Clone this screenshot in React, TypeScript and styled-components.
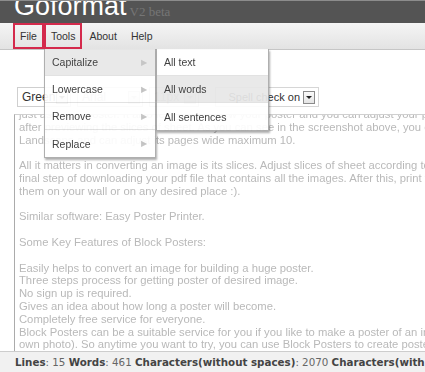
import React from "react";
import styled, { createGlobalStyle, css } from "styled-components";

const GlobalStyle = createGlobalStyle`
  html, body { margin: 0; padding: 0; background: #fff; }
  body { width: 425px; height: 372px; overflow: hidden; font-family: "Liberation Sans", Arial, sans-serif; }
`;

const Page = styled.div`
  position: relative;
  width: 425px;
  height: 372px;
  overflow: hidden;
  display: flex;
  flex-direction: column;
`;

const Header = styled.header`
  height: 22px;
  border-top: 1px solid #8c8c8c;
  background: #545454;
  display: flex;
  align-items: flex-start;
  gap: 3px;
  padding-left: 14px;
  overflow: hidden;
  flex-shrink: 0;
`;

const Title = styled.div`
  font-size: 27px;
  line-height: 27px;
  margin-top: -8px;
  color: #fff;
`;

const Version = styled.div`
  font-size: 13px;
  line-height: 13px;
  margin-top: 4px;
  color: #767676;
  font-family: "Liberation Serif", serif;
`;

const MenuBar = styled.nav`
  height: 26px;
  border-bottom: 1px solid #c6c6c6;
  background: linear-gradient(#f5f5f5, #e3e3e3);
  display: flex;
  align-items: stretch;
  padding-left: 13px;
  flex-shrink: 0;
`;

const MenuItem = styled.div<{ $active?: boolean; $marked?: boolean }>`
  display: flex;
  align-items: center;
  padding: 0 7px;
  font-size: 10.5px;
  color: #333;
  ${(p) =>
    p.$active &&
    css`
      border-left: 1px solid #aaa;
      border-right: 1px solid #aaa;
      padding: 0 6px;
    `}
  ${(p) =>
    p.$marked &&
    css`
      outline: 2px solid #d42a4c;
      outline-offset: -2px;
    `}
`;

const Toolbar = styled.div`
  margin-top: 37px;
  height: 20px;
  display: flex;
  align-items: center;
  gap: 6px;
  padding-left: 17px;
  flex-shrink: 0;
`;

const Select = styled.div<{ $w: number; $disabled?: boolean }>`
  width: ${(p) => p.$w}px;
  height: 20px;
  box-sizing: border-box;
  border: 1px solid #cfcfcf;
  display: flex;
  align-items: center;
  justify-content: space-between;
  padding: 0 2px 0 4px;
  font-size: 12px;
  color: ${(p) => (p.$disabled ? "#b0b0b0" : "#333")};
`;

const DropButton = styled.span<{ $disabled?: boolean }>`
  width: 12px;
  height: 13px;
  box-sizing: border-box;
  border: 1px solid ${(p) => (p.$disabled ? "#d4d4d4" : "#8a8a8a")};
  background: linear-gradient(#fafafa, #e4e4e4);
  display: flex;
  align-items: center;
  justify-content: center;
  &::after {
    content: "";
    border-left: 3px solid transparent;
    border-right: 3px solid transparent;
    border-top: 3px solid ${(p) => (p.$disabled ? "#bbb" : "#222")};
  }
`;

const SpellBox = styled.div`
  margin-left: auto;
  margin-right: 106px;
  height: 20px;
  box-sizing: border-box;
  border: 1px solid #d6d6d6;
  display: flex;
  align-items: center;
  gap: 3px;
  padding: 0 3px 0 12px;
  font-size: 11px;
  color: #333;
`;

const Editor = styled.div`
  margin-top: 7px;
  margin-left: 14px;
  width: 720px;
  flex: 1;
  min-height: 0;
  border: 1px solid #d0d0d0;
  border-left-color: #ababab;
  border-bottom: none;
  overflow: hidden;
  padding: 0 4px;
`;

const EditorText = styled.div`
  margin-top: -7px;
  white-space: pre;
  font-size: 11.25px;
  line-height: 12.8px;
  color: #b9b9b9;
  filter: blur(0.7px);
`;

const Status = styled.footer`
  height: 20px;
  border-top: 1px solid #cdcdcd;
  background: #f1f1f1;
  display: flex;
  align-items: center;
  padding-left: 15px;
  white-space: pre;
  font-family: "DejaVu Sans", Verdana, sans-serif;
  font-size: 10.3px;
  color: #666;
  flex-shrink: 0;
`;

const StatLabel = styled.b`
  color: #444;
  font-weight: bold;
`;

const Menu = styled.div<{ $left: number; $width: number }>`
  position: absolute;
  top: 49px;
  left: ${(p) => p.$left}px;
  width: ${(p) => p.$width}px;
  box-sizing: border-box;
  background: #fff;
  opacity: 0.93;
  border: 1px solid #a9a9a9;
  border-top: none;
  box-shadow: 1px 2px 2px rgba(0, 0, 0, 0.35);
`;

const MenuRow = styled.div<{ $hl?: boolean }>`
  height: 26px;
  border-bottom: 1px solid #e0e0e0;
  display: flex;
  align-items: center;
  justify-content: space-between;
  padding: 0 8px 0 7px;
  font-size: 10.5px;
  color: #333;
  background: ${(p) => (p.$hl ? "#e8e8e8" : "#fff")};
  &:last-child {
    border-bottom: none;
    height: 27px;
  }
`;

const Arrow = styled.span`
  font-size: 7.5px;
  color: #c2c2c2;
`;

const text = [
  "just as a real poster. It also lets you preview your poster and you can adjust your poster as you like just",
  "after previewing the slices of sheet. As you can see in the screenshot above, you can select Portrait or",
  "Landscape and can adjust its pages wide maximum 10.",
  "",
  "All it matters in converting an image is its slices. Adjust slices of sheet according to your requirement. At the",
  "final step of downloading your pdf file that contains all the images. After this, print them and assemble",
  "them on your wall or on any desired place :).",
  "",
  "Similar software: Easy Poster Printer.",
  "",
  "Some Key Features of Block Posters:",
  "",
  "Easily helps to convert an image for building a huge poster.",
  "Three steps process for getting poster of desired image.",
  "No sign up is required.",
  "Gives an idea about how long a poster will become.",
  "Completely free service for everyone.",
  "Block Posters can be a suitable service for you if you like to make a poster of an image (may be of your",
  "own photo). So anytime you want to try, you can use Block Posters to create posters.",
  "",
].join("\n");

export default function App() {
  return (
    <>
      <GlobalStyle />
      <Page>
        <Header>
          <Title>Goformat</Title>
          <Version>V2 beta</Version>
        </Header>
        <MenuBar>
          <MenuItem $marked>File</MenuItem>
          <MenuItem $active $marked>Tools</MenuItem>
          <MenuItem>About</MenuItem>
          <MenuItem>Help</MenuItem>
        </MenuBar>
        <Toolbar>
          <Select $w={54}>
            Green <DropButton />
          </Select>
          <Select $w={66} $disabled>
            Arial <DropButton $disabled />
          </Select>
          <Select $w={50} $disabled>
            11px <DropButton $disabled />
          </Select>
          <SpellBox>
            Spell check on <DropButton />
          </SpellBox>
        </Toolbar>
        <Editor>
          <EditorText>{text}</EditorText>
        </Editor>
        <Status>
          <StatLabel>Lines</StatLabel>{": 15 "}<StatLabel>Words</StatLabel>{": 461 "}
          <StatLabel>Characters(without spaces)</StatLabel>{": 2070 "}
          <StatLabel>Characters(with spaces)</StatLabel>{": 2531"}
        </Status>
        <Menu $left={44} $width={112}>
          <MenuRow $hl>
            Capitalize <Arrow>▶</Arrow>
          </MenuRow>
          <MenuRow>
            Lowercase <Arrow>▶</Arrow>
          </MenuRow>
          <MenuRow>
            Remove <Arrow>▶</Arrow>
          </MenuRow>
          <MenuRow>
            Replace <Arrow>▶</Arrow>
          </MenuRow>
        </Menu>
        <Menu $left={156} $width={113}>
          <MenuRow>All text</MenuRow>
          <MenuRow $hl>All words</MenuRow>
          <MenuRow>All sentences</MenuRow>
        </Menu>
      </Page>
    </>
  );
}
